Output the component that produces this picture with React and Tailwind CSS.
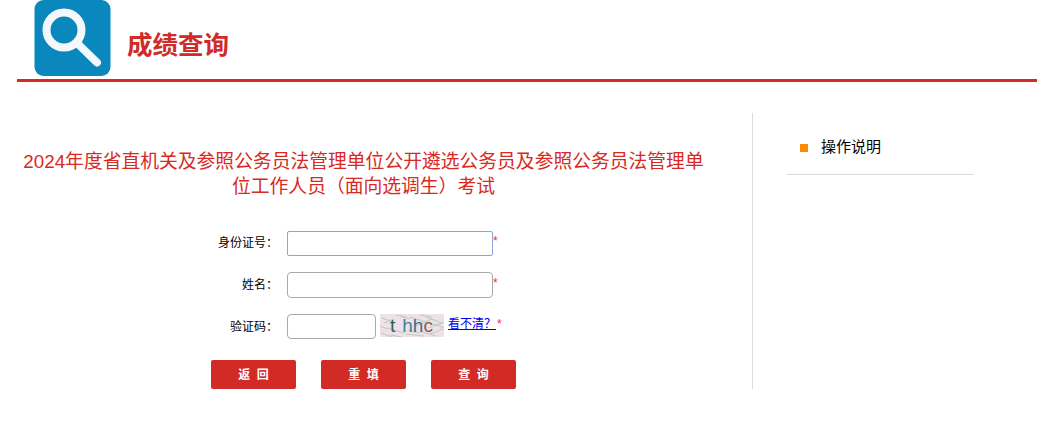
import React from 'react';

const cjk = '"Liberation Sans","Noto Sans CJK SC",sans-serif';

// magnifier logo
const Logo = () => (
    <svg width="77" height="77" viewBox="0 0 77 77" className="block shrink-0">
        <rect x="0.5" y="0" width="76" height="76" rx="9" fill="#0a87bd" />
        <circle cx="30" cy="30" r="17.5" fill="none" stroke="#f4f8fa" strokeWidth="8" />
        <path d="M44 44 L63 62.5" stroke="#f4f8fa" strokeWidth="8" strokeLinecap="round" />
    </svg>
);

// captcha noise + letters
const Captcha = () => {
    const lines = [
        [2, 4, 16, 9], [8, 14, 24, 19], [1, 19, 12, 23], [30, 3, 46, 8], [36, 12, 52, 5],
        [46, 3, 62, 9], [48, 14, 64, 8], [50, 20, 63, 15], [4, 9, 14, 5], [20, 2, 30, 5],
        [26, 20, 44, 22], [54, 10, 64, 14], [10, 21, 22, 23], [42, 18, 56, 22],
        [0, 12, 8, 15], [16, 1, 26, 3], [40, 1, 52, 3], [28, 16, 40, 19],
    ];
    return (
        <div className="relative w-[64px] h-[23px] bg-[#efe0ea] overflow-hidden shrink-0">
            <svg width="64" height="23" className="absolute left-0 top-0">
                {lines.map((l, i) => (
                    <line key={i} x1={l[0]} y1={l[1]} x2={l[2]} y2={l[3]} stroke="#bdd0b8" strokeWidth="1.2" />
                ))}
            </svg>
            <div className="relative flex items-center h-[23px] pl-[10px] text-[19px] leading-none font-['Liberation_Sans']">
                <span className="text-[#2f5f5c] mr-[7px]">t</span>
                <span className="text-[#3f8590]">h</span>
                <span className="text-[#3c6f92]">h</span>
                <span className="text-[#8a5a55]">c</span>
            </div>
        </div>
    );
};

const Star = () => <span className="text-[#ff1a4a] text-[12px] leading-none -mt-[4px]">*</span>;

const Label = ({ children }) => (
    <label className="w-[287px] pr-[9px] text-right text-[12px] text-black shrink-0">{children}</label>
);

const App = () => {
    return (
        <div className="w-[1047px] h-[421px] bg-white overflow-hidden" style={{ fontFamily: cjk }}>
            {/* header */}
            <div className="ml-[17px] w-[1020px] h-[82px] border-b-[3px] border-[#cf2b27] flex pl-[17px]">
                <Logo />
                <h1 className="ml-[16px] mt-[26px] text-[25.5px] leading-[38px] font-bold text-[#cf2b27]">成绩查询</h1>
            </div>

            <div className="flex mt-[31px]">
                {/* left column */}
                <div className="w-[752px] h-[276px] border-r border-[#dcdcdc] box-content">
                    <h2 className="ml-[20px] w-[687px] mt-[36px] text-center text-[18.8px] leading-[25px] text-[#d62a22]">
                        2024年度省直机关及参照公务员法管理单位公开遴选公务员及参照公务员法管理单位工作人员（面向选调生）考试
                    </h2>

                    <div className="mt-[31px] flex flex-col">
                        <div className="flex items-center h-[26px]">
                            <Label>身份证号：</Label>
                            <input className="w-[206px] h-[25px] border border-[#8aa5d8] rounded-[2px] bg-white" />
                            <Star />
                        </div>
                        <div className="flex items-center h-[26px] mt-[16px]">
                            <Label>姓名：</Label>
                            <input className="w-[206px] h-[26px] border border-[#a9a9a9] rounded-[4px] bg-white" />
                            <Star />
                        </div>
                        <div className="flex items-center h-[25px] mt-[16px]">
                            <Label>验证码：</Label>
                            <input className="w-[89px] h-[25px] border border-[#a9a9a9] rounded-[4px] bg-white" />
                            <div className="ml-[4px] -mt-[2px]"><Captcha /></div>
                            <a href="#" className="ml-[4px] -mt-[5px] text-[12px] leading-[16px] text-[#0000ee] underline">看不清？</a>
                            <span className="ml-[1px] -mt-[1px] flex"><Star /></span>
                        </div>
                    </div>

                    <div className="flex gap-[25px] ml-[211px] mt-[21px]">
                        {['返 回', '重 填', '查 询'].map((t) => (
                            <button key={t} className="w-[85px] h-[29px] bg-[#d22b26] rounded-[2px] text-white text-[12px] font-bold whitespace-pre">
                                {t.replace(' ', '  ')}
                            </button>
                        ))}
                    </div>
                </div>

                {/* right column */}
                <div className="ml-[34px] w-[187px]">
                    <div className="h-[62px] border-b border-[#dcdcdc] flex items-center pl-[13px] pt-[8px]">
                        <span className="w-[8px] h-[8px] bg-[#ff8a00] mr-[13px]"></span>
                        <span className="text-[15px] text-black">操作说明</span>
                    </div>
                </div>
            </div>
        </div>
    );
};

export default App;
